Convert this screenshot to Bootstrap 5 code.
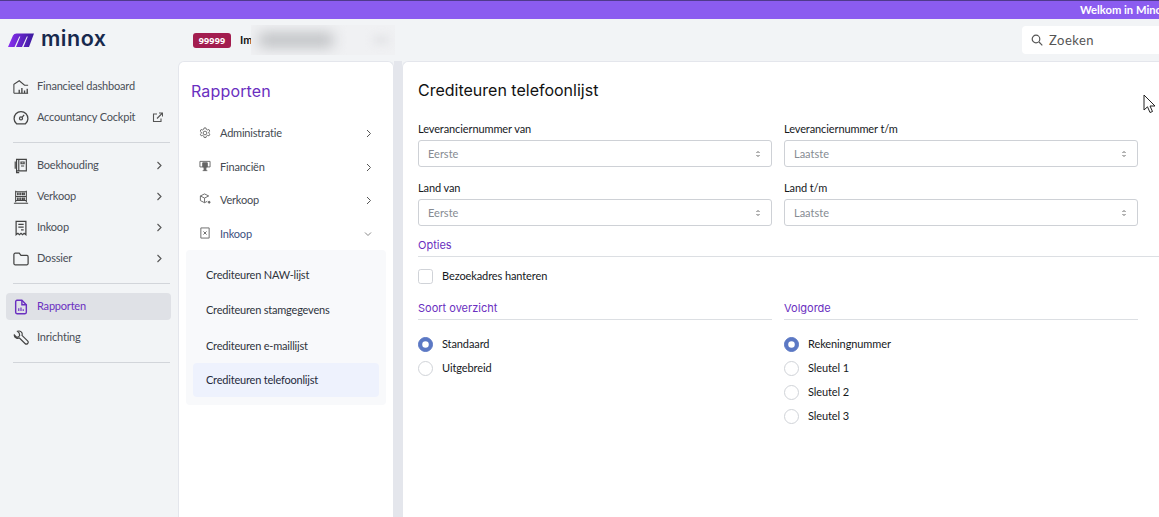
<!DOCTYPE html>
<html lang="nl">
<head>
  <meta charset="UTF-8" />
  <meta name="viewport" content="width=device-width, initial-scale=1" />
  <title>Minox - Crediteuren telefoonlijst</title>
  <link href="https://cdn.jsdelivr.net/npm/bootstrap@5.3.3/dist/css/bootstrap.min.css" rel="stylesheet" />
  <style>
    html, body { height: 100%; overflow: hidden; }
    body { font-family: Lato, "Noto Sans", sans-serif; font-size: 11px; letter-spacing: -.2px; background: #f2f4f6; color: #212529; }
    a { text-decoration: none; }

    .welcome-bar { height: 19px; background: #8b5cf0; border-top: 1px solid #4f3a8c; padding-left: 1080px; color: #fff; font-weight: 700; font-size: 11.2px; letter-spacing: 0; line-height: 17px; white-space: nowrap; overflow: hidden; }
    .top-head { height: 42px; }
    .brand { width: 178px; padding-left: 8px; gap: 7px; }
    .brand-name { font-family: Inter, sans-serif; font-weight: 600; font-size: 21.5px; letter-spacing: .5px; color: #17294d; line-height: 1; margin-top: -3px; }
    .client-no { background: #a31d4f; font-size: 9px; width: 38px; height: 15px; padding: 3px 0; border-radius: 3px; margin: 0 9px 0 15px; letter-spacing: .2px; font-family: "Noto Sans", sans-serif; }
    .client-name { color: #111; font-weight: 700; font-size: 11px; letter-spacing: 0; }
    .client-blur { position: absolute; left: 251px; top: 6px; width: 144px; height: 30px; background: #f0f1f3; overflow: hidden; }
    .client-blur::before { content: ""; position: absolute; left: 8px; top: 8px; width: 74px; height: 14px; background: #bcbec1; filter: blur(7px); }
    .client-blur::after { content: ""; position: absolute; left: 122px; top: 11px; width: 16px; height: 8px; background: #e2e3e6; filter: blur(4px); }
    .search-box { width: 137px; height: 28px; background: #fff; border-radius: 4px 0 0 4px; padding-left: 9px; gap: 6px; color: #555; font-size: 13px; letter-spacing: .5px; line-height: 30px; }

    .page-body { height: 456px; }
    .side-menu { width: 178px; padding: 12px 7px 0 6px; }
    .side-link { height: 27px; margin-bottom: 4px; padding: 0 7px; border-radius: 4px; color: #4a4f57; gap: 8px; }
    .side-link svg.ico { width: 16px; height: 16px; flex: none; color: #444; }
    .side-link .more { margin-left: auto; margin-right: 1px; }
    .side-link.current { background: #dfe1e6; color: #6a2fc0; }
    .side-link.current svg.ico { color: #6a2fc0; }
    .side-rule { margin: 11px 1px 9px 7px; border-top: 1px solid #d2d5da; opacity: 1; }

    .sub-panel { width: 216px; background: #fff; border: 1px solid #e4e6ec; border-bottom: 0; border-radius: 6px 6px 0 0; padding: 0 7px; }
    .sub-title { font-family: Inter, sans-serif; font-weight: 400; font-size: 16px; letter-spacing: .15px; color: #6a2fc0; margin: 20px 0 17px 5px; line-height: 18px; }
    .sub-link { height: 33.4px; padding: 0 14px 0 13px; color: #444a52; gap: 9px; }
    .sub-link svg.ico { width: 12px; height: 12px; flex: none; color: #666; margin-top: -2px; }
    .sub-link .more { margin-left: auto; }
    .sub-link.open { color: #3d4f80; }
    .sub-list { background: #f8f9fb; border-radius: 4px; padding: 8px 7px 8px; margin-top: -1px; }
    .sub-item { height: 35.4px; padding: 0 13px; color: #2f343b; border-radius: 4px; }
    .sub-item.current { background: #eef2fd; color: #262b3c; height: 34px; margin-top: -1px; padding-top: 2px; }

    .panel-gap { width: 8px; flex: none; background: #e4e6ec; }
    .main-panel { flex: 1; min-width: 0; background: #fff; border-left: 1px solid #e4e6ec; border-top: 1px solid #e4e6ec; border-radius: 6px 0 0 0; padding: 0 0 0 15px; position: relative; letter-spacing: -.1px; }
    .main-title { font-family: Inter, sans-serif; font-weight: 400; font-size: 16px; letter-spacing: 0; color: #111; margin: 18px 0 21px; line-height: 20px; }
    .form-grid { width: 732px; --bs-gutter-x: 12px; --bs-gutter-y: 0; }
    .fld-label { display: block; color: #16191d; line-height: 16px; margin-bottom: 3px; }
    .fake-select { height: 27px; min-height: 0; padding: 0 28px 0 9px; font-size: 11px; color: #868b92; border: 1px solid #ced1d6; border-radius: 3px; line-height: 25px; background-size: 8px 10px; background-position: right 9px center; margin-bottom: 13px; background-image: url("data:image/svg+xml,%3csvg xmlns='http://www.w3.org/2000/svg' viewBox='0 0 8 10'%3e%3cpath fill='none' stroke='%23666' stroke-width='1' d='M2.500 4 4 2.500 5.500 4M2.500 6 4 7.500 5.500 6'/%3e%3c/svg%3e"); }
    .sect-head { color: #6a2fc0; font-family: Inter, sans-serif; font-size: 11px; letter-spacing: 0; line-height: 16px; padding-bottom: 3px; border-bottom: 1px solid #dcdfe3; }
    .sect-opties { margin-top: -2px; margin-bottom: 11px; }
    .opt-row { min-height: 0; padding: 0; margin: 0; gap: 9px; height: 24px; color: #16191d; }
    .opt-row .form-check-input { width: 15px; height: 15px; margin: 0; float: none; flex: none; border-color: #d0d3d8; }
    .opt-row .form-check-input:checked { background-color: #5b78c4; border-color: #5b78c4; }
    .opt-check { height: 16px; margin-bottom: 16px; }
    .opt-list { padding-top: 12px; }

    .mouse-arrow { position: absolute; left: 740px; top: 32px; width: 14px; height: 20px; }
  </style>
</head>
<body>
  <div class="welcome-bar">Welkom in Minox</div>

  <header class="top-head d-flex align-items-center position-relative">
    <div class="brand d-flex align-items-center">
      <svg width="26" height="14" viewBox="0 0 26 14">
        <defs><linearGradient id="markGrad" x1="0" x2="1" y1="0" y2="0"><stop offset="0" stop-color="#8a2ff0"/><stop offset="1" stop-color="#3a1a9c"/></linearGradient></defs>
        <path fill="url(#markGrad)" d="M0 14 5 2.500Q6 .5 8.500 .5H26L21 14H15.500L19.800 3.500H18.800L14 14H8L12.300 3.500H11.300L6.500 14Z"/>
      </svg>
      <span class="brand-name">minox</span>
    </div>
    <span class="badge client-no">99999</span>
    <span class="client-name">Im</span>
    <div class="client-blur"></div>
    <div class="search-box d-flex align-items-center ms-auto">
      <svg width="12" height="12" viewBox="0 0 12 12" fill="none" stroke="#555" stroke-width="1.200"><circle cx="5" cy="5" r="3.800"/><path d="M8 8l3.300 3.300"/></svg>
      <span>Zoeken</span>
    </div>
  </header>

  <div class="page-body d-flex">
    <nav class="side-menu flex-shrink-0">
      <a class="side-link d-flex align-items-center" href="#">
        <svg class="ico" viewBox="0 0 18 18" fill="none" stroke="currentColor" stroke-width="1.200"><path d="M1 16V6l6-4 6 5h4M1 16h16"/><path stroke-width="1.500" d="M7 16v-4M10 16v-6M13 16v-3M16 16v-5"/></svg>
        <span>Financieel dashboard</span>
      </a>
      <a class="side-link d-flex align-items-center" href="#">
        <svg class="ico" viewBox="0 0 18 18" fill="none" stroke="currentColor" stroke-width="1.400"><path d="M4 15.500a7.800 7.800 0 1 1 10 0Z"/><circle cx="9" cy="9.500" r="1.700"/><path d="M10.500 8l2-2.500"/></svg>
        <span>Accountancy Cockpit</span>
        <svg class="more" width="11" height="11" viewBox="0 0 11 11" fill="none" stroke="#555" stroke-width="1.100"><path d="M5 2H1.500v7.500H9V6.500"/><path d="M5 6.500 10 1.500M7 1h3.500v3.500"/></svg>
      </a>
      <hr class="side-rule" />
      <a class="side-link d-flex align-items-center" href="#">
        <svg class="ico" viewBox="0 0 18 18" fill="none" stroke="currentColor" stroke-width="1.300"><path d="M4 1.500h11v13H4zM4 14.500v2h3M6.500 1.500v13"/><path d="M9 4.500h3.500v2H9zM9 9h3.500"/><path d="M2.500 4v8"/></svg>
        <span>Boekhouding</span>
        <svg class="more" width="7" height="9" viewBox="0 0 7 9" fill="none" stroke="#555" stroke-width="1.100"><path d="M1.500 1l3.500 3.500L1.500 8"/></svg>
      </a>
      <a class="side-link d-flex align-items-center" href="#">
        <svg class="ico" viewBox="0 0 18 18" fill="none" stroke="currentColor" stroke-width="1.200"><path d="M3 2v13M15 2v13M1 16h16M3 3h12M3 8.500h12M3 13h12"/><path stroke-width="1.800" d="M5.500 4v3M8 4v3M10.500 4v3M12.500 4v3M5.500 9.500v3M8 9.500v3M10.500 9.500v3M12.500 9.500v3"/></svg>
        <span>Verkoop</span>
        <svg class="more" width="7" height="9" viewBox="0 0 7 9" fill="none" stroke="#555" stroke-width="1.100"><path d="M1.500 1l3.500 3.500L1.500 8"/></svg>
      </a>
      <a class="side-link d-flex align-items-center" href="#">
        <svg class="ico" viewBox="0 0 18 18" fill="none" stroke="currentColor" stroke-width="1.400"><path d="M3.500 1.500h11v15l-2-1.500-1.700 1.500L9 15l-1.800 1.500L5.500 15l-2 1.500Z"/><path d="M6 5h6M6 8h6M9 11h3"/></svg>
        <span>Inkoop</span>
        <svg class="more" width="7" height="9" viewBox="0 0 7 9" fill="none" stroke="#555" stroke-width="1.100"><path d="M1.500 1l3.500 3.500L1.500 8"/></svg>
      </a>
      <a class="side-link d-flex align-items-center" href="#">
        <svg class="ico" viewBox="0 0 18 18" fill="none" stroke="currentColor" stroke-width="1.400"><path d="M2.500 2.500H7L9 5h6.500a1.500 1.500 0 0 1 1.500 1.500V14a1.500 1.500 0 0 1-1.500 1.500h-13A1.500 1.500 0 0 1 1 14V4a1.500 1.500 0 0 1 1.500-1.500Z"/></svg>
        <span>Dossier</span>
        <svg class="more" width="7" height="9" viewBox="0 0 7 9" fill="none" stroke="#555" stroke-width="1.100"><path d="M1.500 1l3.500 3.500L1.500 8"/></svg>
      </a>
      <hr class="side-rule" />
      <a class="side-link current d-flex align-items-center" href="#">
        <svg class="ico" viewBox="0 0 18 18" fill="none" stroke="currentColor" stroke-width="1.600"><path d="M3 3a1.500 1.500 0 0 1 1.500-1.500H10L15 6.500v8.500a1.500 1.500 0 0 1-1.500 1.500h-9A1.500 1.500 0 0 1 3 15Z"/><path d="M10 1.500v5h5"/><path stroke-width="1.300" d="M6.500 13.500v-3M9 13.500V9.500M11.500 13.500v-2"/></svg>
        <span>Rapporten</span>
      </a>
      <a class="side-link d-flex align-items-center" href="#">
        <svg class="ico" viewBox="0 0 18 18" fill="none" stroke="currentColor" stroke-width="1.300"><path d="M1.500 5.500 4 8l2-.2 1.500-1.500L7 3.500 5 1.500c2-.8 4.300-.2 5 1.700.5 1 .4 2 .1 2.800l6.300 6.300c.9.900.9 2 .1 2.900-.9.900-2.100.9-3 0L7.200 9C6 9.500 4.700 9.500 3.600 8.900 2 8.200 1.200 7 1.500 5.500Z"/></svg>
        <span>Inrichting</span>
      </a>
      <hr class="side-rule" />
    </nav>

    <aside class="sub-panel flex-shrink-0">
      <h2 class="sub-title">Rapporten</h2>
      <a class="sub-link d-flex align-items-center" href="#">
        <svg class="ico" viewBox="0 0 13 13" fill="none" stroke="currentColor"><circle cx="6.500" cy="6.500" r="2"/><path d="M5.500 1h2l.4 1.500 1.400.7 1.400-.5 1 1.700-1.100 1 .1 1.500 1.100 1-1 1.700-1.400-.5-1.400.8-.4 1.500h-2l-.4-1.500-1.400-.8-1.400.5-1-1.700 1.100-1-.1-1.500-1.100-1 1-1.700 1.400.5 1.400-.7Z"/></svg>
        <span>Administratie</span>
        <svg class="more" width="6" height="9" viewBox="0 0 6 9" fill="none" stroke="#555" stroke-width="1"><path d="M1 1l3.500 3.500L1 8"/></svg>
      </a>
      <a class="sub-link d-flex align-items-center" href="#">
        <svg class="ico" viewBox="0 0 13 13" fill="#666" stroke="currentColor"><path fill="none" d="M1 1.500h11v6H1z"/><path d="M4 3h5v4.500H4zM5.500 7.500h2V11h-2zM4 11.500h5"/></svg>
        <span>Financiën</span>
        <svg class="more" width="6" height="9" viewBox="0 0 6 9" fill="none" stroke="#555" stroke-width="1"><path d="M1 1l3.500 3.500L1 8"/></svg>
      </a>
      <a class="sub-link d-flex align-items-center" href="#">
        <svg class="ico" viewBox="0 0 13 13" fill="none" stroke="currentColor"><path d="M6 1 1.500 3.200v5L6 10.500 9 9"/><path d="M1.500 3.200 6 5.500l4.500-2.300L6 1M6 5.500v5"/><circle cx="11" cy="10" r="1" fill="currentColor"/></svg>
        <span>Verkoop</span>
        <svg class="more" width="6" height="9" viewBox="0 0 6 9" fill="none" stroke="#555" stroke-width="1"><path d="M1 1l3.500 3.500L1 8"/></svg>
      </a>
      <a class="sub-link open d-flex align-items-center" href="#">
        <svg class="ico" viewBox="0 0 13 13" fill="none" stroke="currentColor"><path d="M2 1h9v11H2z"/><path d="M4.800 4.800l3.400 3.400M8.200 4.800 4.800 8.200"/></svg>
        <span>Inkoop</span>
        <svg class="more" width="8" height="6" viewBox="0 0 8 6" fill="none" stroke="#888" stroke-width="1"><path d="M1 1.500 4 4.500l3-3"/></svg>
      </a>
      <div class="sub-list">
        <a class="sub-item d-flex align-items-center" href="#">Crediteuren NAW-lijst</a>
        <a class="sub-item d-flex align-items-center" href="#">Crediteuren stamgegevens</a>
        <a class="sub-item d-flex align-items-center" href="#">Crediteuren e-maillijst</a>
        <a class="sub-item current d-flex align-items-center" href="#">Crediteuren telefoonlijst</a>
      </div>
    </aside>

    <div class="panel-gap"></div>

    <main class="main-panel">
      <h1 class="main-title">Crediteuren telefoonlijst</h1>
      <div class="row form-grid">
        <div class="col-6">
          <label class="fld-label">Leveranciernummer van</label>
          <select class="form-select fake-select"><option>Eerste</option></select>
        </div>
        <div class="col-6">
          <label class="fld-label">Leveranciernummer t/m</label>
          <select class="form-select fake-select"><option>Laatste</option></select>
        </div>
        <div class="col-6">
          <label class="fld-label">Land van</label>
          <select class="form-select fake-select"><option>Eerste</option></select>
        </div>
        <div class="col-6">
          <label class="fld-label">Land t/m</label>
          <select class="form-select fake-select"><option>Laatste</option></select>
        </div>
      </div>

      <div class="sect-head sect-opties">Opties</div>
      <div class="form-check opt-row opt-check d-flex align-items-center">
        <input class="form-check-input" type="checkbox" id="bezoek" />
        <label class="form-check-label" for="bezoek">Bezoekadres hanteren</label>
      </div>

      <div class="row form-grid">
        <div class="col-6">
          <div class="sect-head">Soort overzicht</div>
          <div class="opt-list">
            <div class="form-check opt-row d-flex align-items-center">
              <input class="form-check-input" type="radio" name="soort" id="s1" checked />
              <label class="form-check-label" for="s1">Standaard</label>
            </div>
            <div class="form-check opt-row d-flex align-items-center">
              <input class="form-check-input" type="radio" name="soort" id="s2" />
              <label class="form-check-label" for="s2">Uitgebreid</label>
            </div>
          </div>
        </div>
        <div class="col-6">
          <div class="sect-head">Volgorde</div>
          <div class="opt-list">
            <div class="form-check opt-row d-flex align-items-center">
              <input class="form-check-input" type="radio" name="volgorde" id="v1" checked />
              <label class="form-check-label" for="v1">Rekeningnummer</label>
            </div>
            <div class="form-check opt-row d-flex align-items-center">
              <input class="form-check-input" type="radio" name="volgorde" id="v2" />
              <label class="form-check-label" for="v2">Sleutel 1</label>
            </div>
            <div class="form-check opt-row d-flex align-items-center">
              <input class="form-check-input" type="radio" name="volgorde" id="v3" />
              <label class="form-check-label" for="v3">Sleutel 2</label>
            </div>
            <div class="form-check opt-row d-flex align-items-center">
              <input class="form-check-input" type="radio" name="volgorde" id="v4" />
              <label class="form-check-label" for="v4">Sleutel 3</label>
            </div>
          </div>
        </div>
      </div>

      <svg class="mouse-arrow" viewBox="0 0 14 20"><path fill="#fff" stroke="#222" stroke-width="1" d="M1 1v15l3.500-3.200L7 18.500l2.500-1-2.500-5.500h5Z"/></svg>
    </main>
  </div>
  <script src="https://cdn.jsdelivr.net/npm/bootstrap@5.3.3/dist/js/bootstrap.bundle.min.js"></script>
</body>
</html>
